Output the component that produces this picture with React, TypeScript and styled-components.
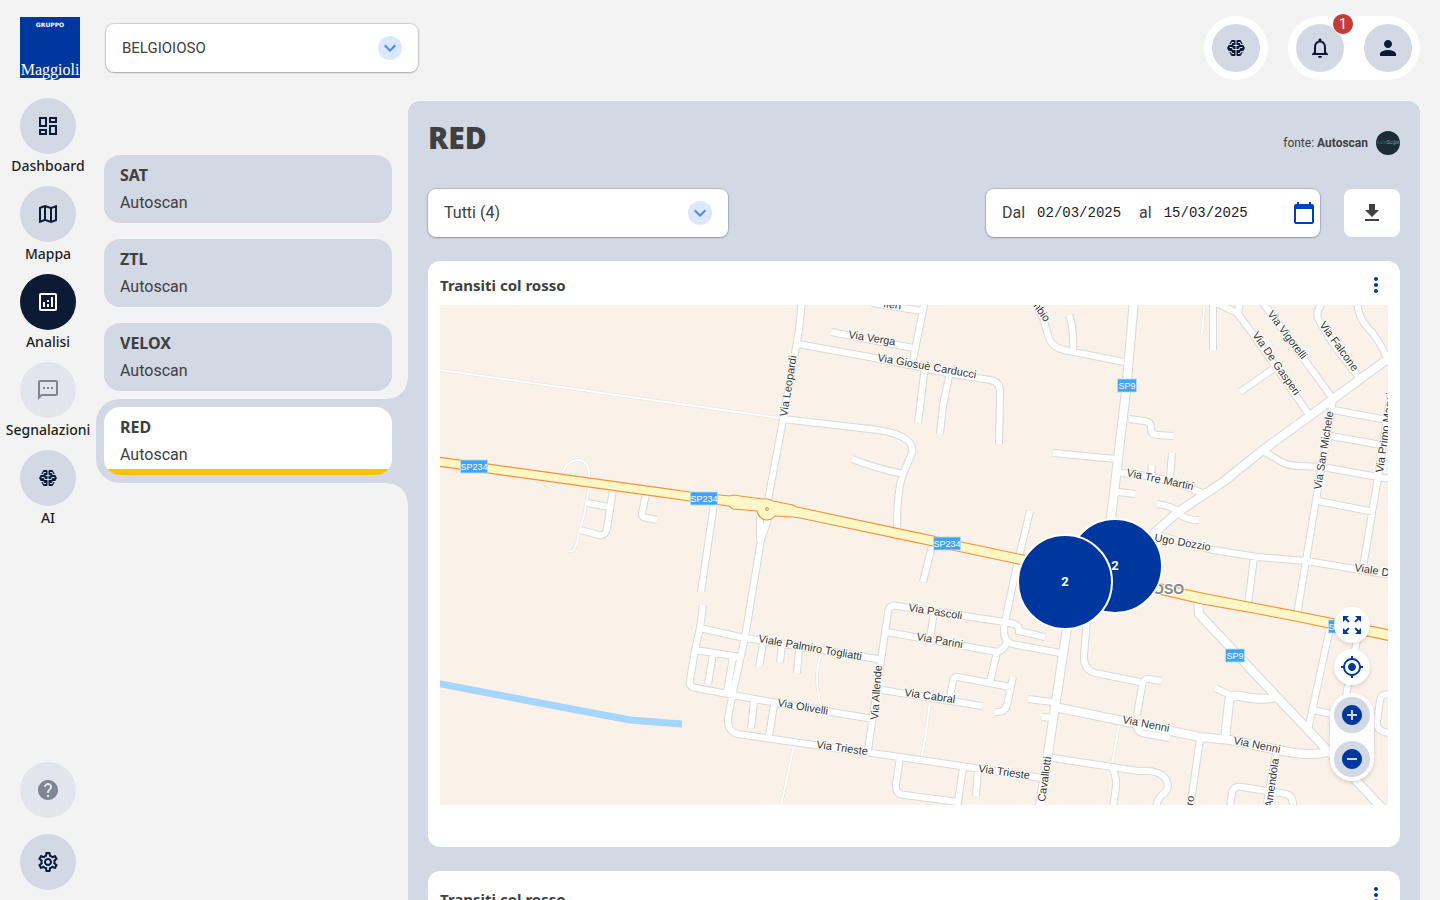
import React from "react";
import styled, { createGlobalStyle, css } from "styled-components";
import {
  MdAddCircle,
  MdCalendarToday,
  MdExpandMore,
  MdFileDownload,
  MdHelp,
  MdMoreVert,
  MdMyLocation,
  MdNotificationsNone,
  MdOutlineAnalytics,
  MdOutlineDashboard,
  MdOutlineMap,
  MdOutlineSettings,
  MdOutlineSms,
  MdPerson,
  MdRemoveCircle,
  MdZoomOutMap,
} from "react-icons/md";

const color = {
  page: "#f3f3f3",
  panel: "#d2d8e4",
  navy: "#0c1a36",
  blue: "#00379e",
  text: "#404040",
  amber: "#ffc107",
};
const headingFont = `"Noto Sans", "Open Sans", sans-serif`;
const bodyFont = `Roboto, "Liberation Sans", sans-serif`;

const GlobalStyle = createGlobalStyle`
  *, *::before, *::after { box-sizing: border-box; }
  body { margin: 0; background: ${color.page}; color: ${color.text}; font: 400 16px/24px ${bodyFont}; }
  button, input, select { font: inherit; color: inherit; }
  button { border: 0; padding: 0; cursor: pointer; }
  h1, h2, h3, p { margin: 0; }
`;

/* ---------- shell ---------- */

const Shell = styled.div`
  display: flex;
  height: 100vh;
  overflow: hidden;
`;

const Sidebar = styled.aside`
  display: flex;
  flex-direction: column;
  justify-content: space-between;
  flex: none;
  width: 96px;
  padding: 16px 0 10px;
`;

const LogoLink = styled.a`
  display: block;
  width: 60px;
  height: 64px;
  margin: 0 16px 18px 20px;
`;

const Nav = styled.nav<{ $gap: number }>`
  display: flex;
  flex-direction: column;
  align-items: center;
  gap: ${(p) => p.$gap}px;
`;

const NavLink = styled.a`
  display: flex;
  flex-direction: column;
  align-items: center;
  color: #1f1f1f;
  font: 500 14px/24px ${headingFont};
  text-decoration: none;
`;

const Disc = styled.span<{ $active?: boolean; $faded?: boolean }>`
  display: grid;
  place-items: center;
  width: 56px;
  height: 56px;
  border-radius: 50%;
  background: ${(p) => (p.$active ? color.navy : color.panel)};
  color: ${(p) => (p.$active ? "#fff" : color.navy)};
  opacity: ${(p) => (p.$faded ? 0.5 : 1)};
`;

const Workspace = styled.div`
  display: flex;
  flex-direction: column;
  flex: 1;
  min-width: 0;
  padding-right: 20px;
`;

const Header = styled.header`
  display: flex;
  justify-content: space-between;
  align-items: flex-start;
  flex: none;
  height: 101px;
  padding: 16px 0 0 10px;
`;

const HeaderActions = styled.div`
  display: flex;
  gap: 20px;
`;

const ActionPill = styled.div`
  display: flex;
  gap: 20px;
  padding: 8px;
  border-radius: 32px;
  background: #fff;
`;

const RoundButton = styled.button`
  position: relative;
  display: grid;
  place-items: center;
  width: 48px;
  height: 48px;
  border-radius: 50%;
  background: ${color.panel};
  color: ${color.navy};
`;

const Badge = styled.span`
  position: absolute;
  top: -11px;
  right: -10px;
  width: 22px;
  height: 22px;
  border: 1px solid #fff;
  border-radius: 50%;
  background: #c23c3c;
  color: #fff;
  font-size: 14px;
  line-height: 20px;
`;

const Columns = styled.div`
  display: flex;
  flex: 1;
  min-height: 0;
`;

/* ---------- form controls ---------- */

const fieldBox = css`
  height: 48px;
  border-radius: 8px;
  background: #fff;
  box-shadow: 0 0 1px 1px rgba(60, 70, 90, 0.2), 0 1px 2px rgba(0, 0, 0, 0.2);
`;

const SelectBox = styled.div<{ $width: number; $top?: number }>`
  ${fieldBox}
  position: relative;
  width: ${(p) => p.$width}px;
  margin-top: ${(p) => p.$top ?? 0}px;
`;

const SelectInput = styled.select<{ $small?: boolean }>`
  width: 100%;
  height: 100%;
  padding: 0 48px 0 16px;
  border: 0;
  border-radius: 8px;
  background: transparent;
  appearance: none;
  font-size: ${(p) => (p.$small ? 15 : 16)}px;
`;

const SelectArrow = styled.span`
  position: absolute;
  top: 12px;
  right: 16px;
  display: grid;
  place-items: center;
  width: 24px;
  height: 24px;
  border-radius: 50%;
  background: #dce8ff;
  color: #4a86ff;
  pointer-events: none;
`;

const DateRange = styled.div`
  ${fieldBox}
  display: flex;
  align-items: center;
  width: 334px;
  padding: 0 4px 0 16px;
`;

const DateLabel = styled.label`
  display: flex;
  align-items: center;
  gap: 12px;
  margin-right: 16px;
`;

const DateInput = styled.input`
  width: 86px;
  padding: 0;
  border: 0;
  background: none;
  color: #222;
  font: 400 14px/24px "Liberation Mono", monospace;
`;

const CalendarButton = styled.button`
  display: grid;
  margin-left: auto;
  background: none;
  color: #0040b8;
`;

const DownloadButton = styled.button`
  display: grid;
  place-items: center;
  width: 56px;
  height: 48px;
  border-radius: 8px;
  background: #fff;
  color: ${color.text};
`;

/* ---------- source list ---------- */

const SourceList = styled.nav`
  display: flex;
  flex-direction: column;
  flex: none;
  width: 312px;
  padding-top: 46px;
`;

const SourceSlot = styled.div<{ $active?: boolean }>`
  position: relative;
  padding: 8px 16px 8px 8px;

  ${(p) =>
    p.$active &&
    css`
      border-radius: 24px 0 0 24px;
      background: ${color.panel};

      &::before,
      &::after {
        content: "";
        position: absolute;
        right: 0;
        width: 20px;
        height: 20px;
      }
      &::before {
        bottom: 100%;
        background: radial-gradient(circle at 0 0, transparent 19px, ${color.panel} 20px);
      }
      &::after {
        top: 100%;
        background: radial-gradient(circle at 0 100%, transparent 19px, ${color.panel} 20px);
      }
    `}
`;

const SourceCard = styled.a<{ $active?: boolean }>`
  display: flex;
  flex-direction: column;
  gap: 4px;
  padding: 8px 16px;
  border-radius: 16px;
  background: ${(p) =>
    p.$active
      ? `linear-gradient(${color.amber}, ${color.amber}) bottom / 100% 6px no-repeat #fff`
      : color.panel};
  color: inherit;
  text-decoration: none;
`;

const SourceName = styled.strong`
  font: 700 16px/24px ${headingFont};
`;

/* ---------- main panel ---------- */

const Main = styled.main`
  display: flex;
  flex-direction: column;
  flex: 1;
  gap: 24px;
  min-width: 0;
  padding: 16px 20px 0;
  border-radius: 12px 12px 0 0;
  background: ${color.panel};
  overflow: hidden auto;
  scrollbar-width: none;
`;

const TitleRow = styled.div`
  display: flex;
  justify-content: space-between;
  align-items: center;
  flex: none;
  height: 48px;
`;

const Title = styled.h1`
  margin-bottom: 6px;
  font: 800 30px/40px "Open Sans", "Noto Sans", sans-serif;
`;

const Origin = styled.p`
  display: flex;
  align-items: center;
  gap: 8px;
  padding-top: 4px;
  font-size: 12px;
`;

const OriginMark = styled.span`
  display: grid;
  place-items: center;
  width: 24px;
  height: 24px;
  border-radius: 50%;
  background: #1c2b36;
`;

const Filters = styled.div`
  display: flex;
  flex: none;
  gap: 24px;
`;

const FilterSpacer = styled.div`
  flex: 1;
`;

const Card = styled.section`
  flex: none;
  padding: 12px 12px 42px;
  border-radius: 12px;
  background: #fff;
`;

const CardHeader = styled.div<{ $tall?: boolean }>`
  display: flex;
  justify-content: space-between;
  height: ${(p) => (p.$tall ? 32 : 24)}px;
  margin-bottom: 8px;
`;

const CardTitle = styled.h2`
  align-self: center;
  font: 700 15px/24px ${headingFont};
`;

const MenuButton = styled.button`
  display: grid;
  width: 24px;
  height: 24px;
  background: none;
  color: ${color.blue};
`;

/* ---------- map ---------- */

const MapFrame = styled.div`
  position: relative;
  aspect-ratio: 948 / 500;
  overflow: hidden;
  background: #faf1e8;
`;

const MapDrawing = styled.svg`
  display: block;
  width: 100%;
  height: 100%;
`;

const Cluster = styled.button<{ $x: number; $y: number }>`
  position: absolute;
  left: ${(p) => (p.$x / 948) * 100}%;
  top: ${(p) => (p.$y / 500) * 100}%;
  width: 96px;
  height: 96px;
  border: 2px solid #fff;
  border-radius: 50%;
  background: ${color.blue};
  color: #fff;
  font: 700 13px/16px ${bodyFont};
  transform: translate(-50%, -50%);
`;

const MapControls = styled.div`
  position: absolute;
  right: 14px;
  bottom: 24px;
  display: flex;
  flex-direction: column;
  align-items: center;
  gap: 6px;
`;

const MapButton = styled.button<{ $tinted?: boolean }>`
  display: grid;
  place-items: center;
  width: 36px;
  height: 36px;
  border-radius: 50%;
  background: ${(p) => (p.$tinted ? color.panel : "#fff")};
  color: ${color.blue};
  box-shadow: ${(p) => (p.$tinted ? "none" : "0 2px 4px rgba(0, 0, 0, 0.12)")};
`;

const ZoomPill = styled.div`
  display: flex;
  flex-direction: column;
  gap: 8px;
  margin-top: 2px;
  padding: 4px;
  border-radius: 22px;
  background: #fff;
  box-shadow: 0 2px 4px rgba(0, 0, 0, 0.15);
`;

const TILE = { x: 440, y: 305 };

const WIDE_ROADS = [
  "M1134 300L1126 391L1111 518L1090 575L1067 628L1055 707L1040 806",
  "M1392 356L1333 399L1263 450L1223 482L1178 512L1153 534",
  "M1198 600L1199 614L1277 697L1330 753L1382 808",
  "M1055 707L1200 737L1230 740L1283 751Q1313 757 1330 751",
  "M1277 697Q1263 701 1240 696Q1230 694 1229 702L1225 740",
];

const ROADS = [
  "M587 503L609 507",
  "M613 489L607 529Q605 536 599 535L580 530",
  "M646 494L642 513Q641 518 648 518L657 520",
  "M714 504L701 592",
  "M802 300L799 330L783 420L768 500",
  "M760 516L760 540M769 516L761 540L745 637L733 692L728 718Q727 731 738 734L793 742L900 757L1042 778",
  "M872 303L922 311",
  "M925 300L920 325L913 360",
  "M925 366L918 423",
  "M950 372L943 405L940 434",
  "M831 332L913 348",
  "M798 344L880 359L953 374L990 380Q1001 382 1000 394L999 444",
  "M783 419L878 430Q916 436 912 453L903 474Q897 490 897 527",
  "M852 459Q875 468 903 474",
  "M1053 453L1116 459",
  "M1030 511L1017 565L1005 622Q1001 640 1012 644L1060 653",
  "M1007 641Q1005 650 997 652L990 682",
  "M1034 300L1043 318L1049 338Q1052 347 1064 350L1124 362",
  "M1069 315Q1074 328 1073 350",
  "M1129 419L1145 421Q1151 422 1151 428Q1151 435 1158 435L1173 436",
  "M1120 473Q1165 476 1202 493",
  "M1152 465L1151 476M1172 453L1170 478",
  "M1118 492L1135 494",
  "M1157 504Q1174 506 1180 514Q1185 520 1199 520",
  "M1240 392L1273 369",
  "M1213 300L1213 350",
  "M1210 300L1237 313L1250 330L1310 416",
  "M1240 300L1238 313",
  "M1261 300L1333 399",
  "M1322 304Q1314 313 1320 322Q1335 350 1360 378",
  "M1357 300Q1358 317 1367 327Q1380 340 1387 359",
  "M1333 399L1331 412L1316 500L1297 615",
  "M1334 410L1387 420",
  "M1331 436L1381 445",
  "M1263 451L1280 461Q1288 466 1300 466L1323 467L1378 477L1390 479",
  "M1318 501L1374 512",
  "M1391 392L1378 477L1363 567",
  "M1153 534L1213 550L1257 557L1307 561L1390 575",
  "M1254 558L1248 604",
  "M1215 688L1230 695",
  "M1087 620L1084 655Q1083 669 1095 673L1140 682",
  "M1161 681L1149 679Q1143 678 1142 686L1137 715",
  "M1137 724Q1136 731 1142 733L1169 738",
  "M1053 758L1138 771Q1158 769 1165 778Q1172 788 1161 796Q1157 800 1156 808",
  "M1112 768Q1117 778 1116 787L1113 807",
  "M1200 739L1190 808",
  "M1276 753L1266 808",
  "M1230 808L1232 792Q1234 786 1242 787L1286 794Q1294 796 1293 808",
  "M1330 628L1308 730M1313 710L1332 714",
  "M1357 640L1345 700",
  "M1390 694Q1381 694 1380 700L1377 722Q1376 732 1390 733",
  "M1005 622L897 606Q889 604 888 612L868 750",
  "M887 632L997 652",
  "M934 612L929 645",
  "M1005 622L1014 624Q1019 625 1019 631L1045 637",
  "M882 690L982 706",
  "M950 697L953 680Q954 677 958 677L1010 687",
  "M1013 677L1007 705Q1005 713 995 712",
  "M700 628L740 637L878 659",
  "M703 605L700 628L695 650L690 680Q688 687 696 688L760 700L873 719",
  "M695 650L740 657",
  "M713 654L708 684M733 657L727 692",
  "M754 702L751 728M774 705L769 736",
  "M763 643L759 667M782 645L780 662M799 650L797 673",
  "M932 546L923 582",
  "M900 758L896 784Q895 795 905 795L958 802",
  "M963 768L957 808M978 770L976 796",
  "M1028 699L1053 702M1042 717L1052 718",
];

const PATHS = [
  "M440 370L560 387L780 418",
  "M562 473Q567 460 580 460Q590 462 589 477",
  "M589 488L584 515L576 545Q574 553 568 551",
  "M1205 300L1202 334",
  "M1119 725L1112 765",
  "M821 653Q813 678 821 705",
  "M794 745L781 806",
  "M930 701L925 740L921 758",
];

const HIGHWAY =
  "M430 456L690 492L730 496L733 495L762 499Q768 498 773 501L793 505L797 507L933 536L1023 555L1115 574L1202 593L1248 602L1300 612L1400 632L1400 643L1300 622L1248 612L1202 604L1115 584L1023 565L933 546L800 518L793 517L775 516Q772 520 766 520Q759 519 757 511L733 509L729 506L690 501L430 465Z";

type Label = [text: string, x: number, y: number, angle: number];

const STREET_LABELS: Label[] = [
  ["fieri", 883, 307, 8],
  ["Via Verga", 848, 338, 9],
  ["Via Giosuè Carducci", 877, 361, 10],
  ["Via Leopardi", 787, 417, -81],
  ["mbio", 1031, 303, 55],
  ["Via Vigorelli", 1267, 314, 53],
  ["Via De Gasperi", 1252, 335, 55],
  ["Via Falcone", 1319, 325, 54],
  ["Via San Michele", 1321, 490, -81],
  ["Via Primo Maggio", 1383, 473, -82],
  ["Via Tre Martiri", 1126, 476, 12],
  ["Ugo Dozzio", 1154, 541, 10],
  ["Viale Dante", 1354, 571, 9],
  ["Via Pascoli", 908, 611, 9],
  ["Via Parini", 916, 640, 10],
  ["Viale Palmiro Togliatti", 758, 642, 10],
  ["Via Allende", 878, 720, -86],
  ["Via Cabral", 904, 696, 8],
  ["Via Olivelli", 777, 706, 10],
  ["Via Trieste", 816, 748, 8],
  ["Via Trieste", 978, 772, 8],
  ["Cavallotti", 1045, 802, -82],
  ["Via Nenni", 1122, 723, 11],
  ["Via Nenni", 1233, 744, 11],
  ["Amendola", 1272, 808, -82],
  ["ro", 1193, 806, -82],
];

const ROUTE_SIGNS: [name: string, x: number, y: number][] = [
  ["SP234", 474, 467],
  ["SP234", 704, 499],
  ["SP234", 947, 544],
  ["SP9", 1127, 386],
  ["SP9", 1235, 656],
  ["SP234", 1342, 627],
];

function StreetMap() {
  const minor = ROADS.join("");
  const wide = WIDE_ROADS.join("");
  const paths = PATHS.join("");
  return (
    <MapDrawing viewBox={`${TILE.x} ${TILE.y} 948 500`} role="img" aria-label="Mappa dei transiti">
      <g fill="none">
        <path d="M436 683L540 703L630 720L682 724" stroke="#a5d6ff" strokeWidth="7" />
        <path d={paths} stroke="#e6e1dc" strokeWidth="3" />
        <path d={paths} stroke="#fff" strokeWidth="2" />
        <path d={minor} stroke="#d9d9d9" strokeWidth="8" />
        <path d={wide} stroke="#d9d9d9" strokeWidth="10" />
        <path d={minor} stroke="#fff" strokeWidth="6" />
        <path d={wide} stroke="#fff" strokeWidth="8" />
      </g>
      <path d={HIGHWAY} fill="#fff7c6" stroke="#f39237" strokeWidth="1.2" />
      <circle cx="767" cy="509" r="1.4" fill="#faf1e8" stroke="#f08a2a" />
      <g fontFamily="Liberation Sans, sans-serif">
        <text x="1153" y="594" fontSize="14" fontWeight="700" fill="#85858c" stroke="#fff" strokeWidth="2" paintOrder="stroke">
          OSO
        </text>
        <g fontSize="11" fill="#333" stroke="#fff" strokeWidth="2" paintOrder="stroke">
          {STREET_LABELS.map(([text, x, y, angle]) => (
            <text key={`${text}${x}`} transform={`translate(${x} ${y}) rotate(${angle})`}>
              {text}
            </text>
          ))}
        </g>
        {ROUTE_SIGNS.map(([name, x, y]) => {
          const w = name.length > 3 ? 27 : 19;
          return (
            <g key={`${name}${x}`}>
              <rect x={x - w / 2} y={y - 7} width={w} height="13" fill="#3fa4f6" stroke="#b5dcfb" strokeWidth="0.8" />
              <text x={x} y={y + 3} fontSize="9" fill="#fff" textAnchor="middle">
                {name}
              </text>
            </g>
          );
        })}
      </g>
    </MapDrawing>
  );
}

/* ---------- drawings ---------- */

function BrainIcon() {
  return (
    <svg width="24" height="24" viewBox="0 -960 960 960" fill="currentColor" aria-hidden="true">
      <path d="M323-160q-11 0-20.5-5.5T288-181l-78-139h58l40 80h92v-40h-68l-40-80H188l-57-100q-2-5-3.5-10t-1.5-10q0-4 5-20l57-100h104l40-80h68v-40h-92l-40 80h-58l78-139q5-10 14.5-15.5T323-800h97q17 0 28.5 11.5T460-760v160h-60l-40 40h100v120h-88l-40-80h-92l-40 40h108l40 80h112v200q0 17-11.5 28.5T420-160h-97Zm217 0q-17 0-28.5-11.5T500-200v-200h112l40-80h108l-40-40h-92l-40 80h-88v-120h100l-40-40h-60v-160q0-17 11.5-28.5T540-800h97q11 0 20.5 5.5T672-779l78 139h-58l-40-80h-92v40h68l40 80h104l57 100q2 5 3.5 10t1.5 10q0 4-5 20l-57 100H668l-40 80h-68v40h92l40-80h58l-78 139q-5 10-14.5 15.5T637-160h-97Z" />
    </svg>
  );
}

function Logo() {
  return (
    <svg width="60" height="64" viewBox="0 0 60 64" role="img" aria-label="Gruppo Maggioli">
      <rect y="1" width="60" height="61" fill={color.blue} />
      <ellipse cx="28" cy="61" rx="4" ry="3" fill={color.blue} />
      <ellipse cx="36" cy="61" rx="4" ry="3" fill={color.blue} />
      <text x="30" y="11" fill="#fff" fontFamily="DejaVu Sans" fontSize="6" fontWeight="700" textAnchor="middle">
        GRUPPO
      </text>
      <text x="30" y="59" fill="#fff" fontFamily="Liberation Serif" fontSize="16" textAnchor="middle">
        Maggioli
      </text>
    </svg>
  );
}

function OriginLogo() {
  return (
    <svg width="24" height="24" viewBox="0 0 24 24" aria-hidden="true">
      <text x="12" y="13" fontFamily="Roboto" fontSize="5" textAnchor="middle" fill="#8b969c">
        <tspan fill="#1f6d68">Auto</tspan>Sc@n
      </text>
    </svg>
  );
}

/* ---------- page ---------- */

const navItems = [
  { label: "Dashboard", icon: <MdOutlineDashboard size={24} /> },
  { label: "Mappa", icon: <MdOutlineMap size={24} /> },
  { label: "Analisi", icon: <MdOutlineAnalytics size={24} />, active: true },
  { label: "Segnalazioni", icon: <MdOutlineSms size={24} />, faded: true },
  { label: "AI", icon: <BrainIcon /> },
];

const sources = ["SAT", "ZTL", "VELOX", "RED"];

type SelectProps = { id: string; label: string; value: string; width: number; top?: number; small?: boolean };

function Select({ id, label, value, width, top, small }: SelectProps) {
  return (
    <SelectBox $width={width} $top={top}>
      <SelectInput id={id} aria-label={label} defaultValue={value} $small={small}>
        <option>{value}</option>
      </SelectInput>
      <SelectArrow>
        <MdExpandMore size={24} />
      </SelectArrow>
    </SelectBox>
  );
}

function ChartCard({ children, tall }: { children?: React.ReactNode; tall?: boolean }) {
  return (
    <Card>
      <CardHeader $tall={tall}>
        <CardTitle>Transiti col rosso</CardTitle>
        <MenuButton aria-label="Altre opzioni">
          <MdMoreVert size={24} />
        </MenuButton>
      </CardHeader>
      {children}
    </Card>
  );
}

export default function App() {
  return (
    <>
      <GlobalStyle />
      <Shell>
        <Sidebar>
          <div>
            <LogoLink href="#">
              <Logo />
            </LogoLink>
            <Nav $gap={8} aria-label="Principale">
              {navItems.map((item) => (
                <NavLink key={item.label} href="#">
                  <Disc $active={item.active} $faded={item.faded}>
                    {item.icon}
                  </Disc>
                  {item.label}
                </NavLink>
              ))}
            </Nav>
          </div>
          <Nav $gap={16} aria-label="Supporto">
            <NavLink href="#" aria-label="Aiuto">
              <Disc $faded>
                <MdHelp size={24} />
              </Disc>
            </NavLink>
            <NavLink href="#" aria-label="Impostazioni">
              <Disc>
                <MdOutlineSettings size={24} />
              </Disc>
            </NavLink>
          </Nav>
        </Sidebar>

        <Workspace>
          <Header>
            <Select id="comune" label="Comune" value="BELGIOIOSO" width={312} top={8} small />
            <HeaderActions>
              <ActionPill>
                <RoundButton aria-label="Assistente AI">
                  <BrainIcon />
                </RoundButton>
              </ActionPill>
              <ActionPill>
                <RoundButton aria-label="Notifiche">
                  <MdNotificationsNone size={24} />
                  <Badge>1</Badge>
                </RoundButton>
                <RoundButton aria-label="Profilo">
                  <MdPerson size={24} />
                </RoundButton>
              </ActionPill>
            </HeaderActions>
          </Header>

          <Columns>
            <SourceList aria-label="Sorgenti">
              {sources.map((name) => (
                <SourceSlot key={name} $active={name === "RED"}>
                  <SourceCard href="#" $active={name === "RED"}>
                    <SourceName>{name}</SourceName>
                    <span>Autoscan</span>
                  </SourceCard>
                </SourceSlot>
              ))}
            </SourceList>

            <Main>
              <TitleRow>
                <Title>RED</Title>
                <Origin>
                  <span>
                    fonte: <b>Autoscan</b>
                  </span>
                  <OriginMark>
                    <OriginLogo />
                  </OriginMark>
                </Origin>
              </TitleRow>

              <Filters>
                <Select id="varchi" label="Varchi" value="Tutti (4)" width={300} />
                <FilterSpacer />
                <DateRange>
                  <DateLabel>
                    Dal
                    <DateInput defaultValue="02/03/2025" />
                  </DateLabel>
                  <DateLabel>
                    al
                    <DateInput defaultValue="15/03/2025" />
                  </DateLabel>
                  <CalendarButton aria-label="Apri calendario">
                    <MdCalendarToday size={24} />
                  </CalendarButton>
                </DateRange>
                <DownloadButton aria-label="Scarica">
                  <MdFileDownload size={24} />
                </DownloadButton>
              </Filters>

              <ChartCard>
                <MapFrame>
                  <StreetMap />
                  <Cluster $x={675} $y={261}>2</Cluster>
                  <Cluster $x={625} $y={277}>2</Cluster>
                  <MapControls>
                    <MapButton aria-label="Schermo intero">
                      <MdZoomOutMap size={24} />
                    </MapButton>
                    <MapButton aria-label="Centra mappa">
                      <MdMyLocation size={24} />
                    </MapButton>
                    <ZoomPill>
                      <MapButton $tinted aria-label="Ingrandisci">
                        <MdAddCircle size={24} />
                      </MapButton>
                      <MapButton $tinted aria-label="Riduci">
                        <MdRemoveCircle size={24} />
                      </MapButton>
                    </ZoomPill>
                  </MapControls>
                </MapFrame>
              </ChartCard>

              <ChartCard tall />
            </Main>
          </Columns>
        </Workspace>
      </Shell>
    </>
  );
}
